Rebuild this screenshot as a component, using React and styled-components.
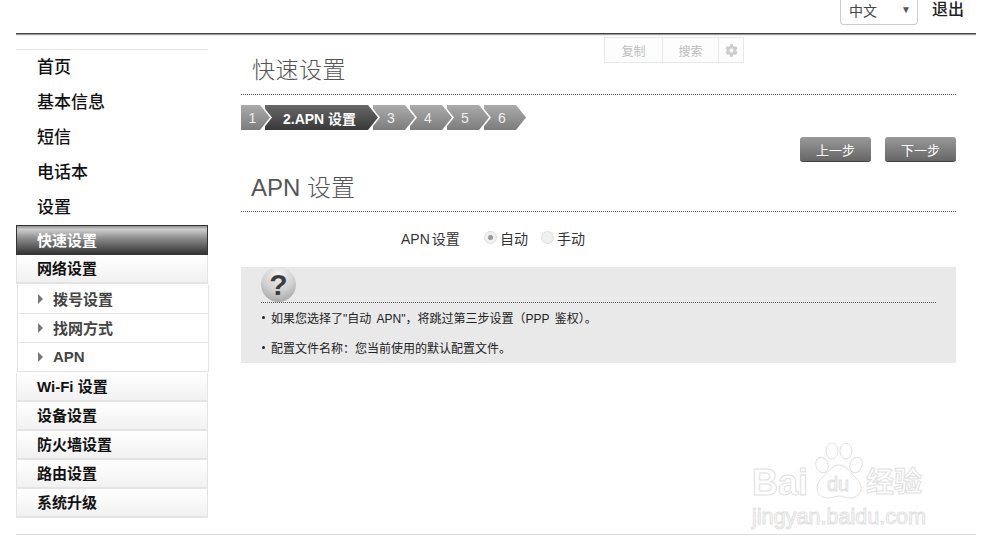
import styled, { createGlobalStyle } from "styled-components";
import { FaCog } from "react-icons/fa";

const GlobalStyle = createGlobalStyle`
  html, body {
    margin: 0;
    padding: 0;
    background: #fff;
    font-family: "Liberation Sans", "Noto Sans CJK SC", sans-serif;
    color: #333;
  }
`;

const Page = styled.div`
  position: relative;
  width: 960px;
  height: 548px;
  margin-left: 16px;
  overflow: hidden;
`;

const Header = styled.header`
  display: flex;
  justify-content: flex-end;
  align-items: flex-start;
  height: 33px;
  border-bottom: 1px solid #444;
  box-shadow: 0 1px 0 #999, 0 2px 0 #eee;
`;

const LangSelect = styled.div`
  box-sizing: border-box;
  display: flex;
  justify-content: space-between;
  align-items: center;
  width: 78px;
  height: 25px;
  padding: 0 6px 5px 8px;
  border: 1px solid #ccc;
  border-top: none;
  border-radius: 0 0 4px 4px;
  font-size: 14px;
  color: #444;
`;

const LangArrow = styled.span`
  font-size: 10px;
  color: #555;
`;

const Logout = styled.a`
  margin: 0 12px 0 14px;
  font-size: 16px;
  line-height: 19px;
  font-weight: 500;
  color: #222;
`;

const Body = styled.div`
  display: flex;
  gap: 33px;
  height: 500px;
  border-bottom: 1px solid #ddd;
`;

const Sidebar = styled.nav`
  width: 192px;
  flex: none;
  padding-top: 15px;
`;

const TopList = styled.div`
  border-top: 1px solid #e8e8e8;
`;

const TopItem = styled.div`
  box-sizing: border-box;
  display: flex;
  align-items: center;
  height: 35px;
  padding: 0 0 5px 21px;
  font-size: 17px;
  font-weight: 500;
  color: #111;
`;

const ActiveItem = styled.div`
  box-sizing: border-box;
  display: flex;
  align-items: center;
  height: 30px;
  padding: 0 0 2px 20px;
  border: 1px solid #333;
  background: linear-gradient(#8f8f8f, #cfcfcf 12%, #8a8a8a 45%, #333);
  font-size: 15px;
  font-weight: 700;
  color: #fff;
`;

const GroupItem = styled.div`
  box-sizing: border-box;
  display: flex;
  align-items: center;
  height: 29px;
  padding: 0 0 2px 20px;
  border: solid #e4e4e4;
  border-width: 0 1px 2px 1px;
  background: linear-gradient(#fff, #f1f1f1);
  font-size: 15px;
  font-weight: 700;
  color: #111;
`;

const SubItem = styled.div`
  box-sizing: border-box;
  display: flex;
  align-items: center;
  gap: 10px;
  width: 192px;
  height: 29px;
  margin-left: 1px;
  padding: 0 0 1px 20px;
  border: solid #e4e4e4;
  border-width: 0 1px 1px 1px;
  background: #fff;
  font-size: 15px;
  font-weight: 700;
  color: #444;
`;

const SubList = styled.div`
  padding: 1px 0;
`;

const SubArrow = styled.span`
  width: 0;
  height: 0;
  border-left: 5px solid #777;
  border-top: 5px solid transparent;
  border-bottom: 5px solid transparent;
`;

const Main = styled.main`
  position: relative;
  width: 715px;
  flex: none;
`;

const Toolbar = styled.div`
  position: absolute;
  top: 3px;
  left: 363px;
  display: flex;
  height: 26px;
  box-sizing: border-box;
  border: 1px solid #e8e8e8;
  background: #fdfdfd;
  font-size: 12px;
  color: #bbb;
`;

const ToolButton = styled.div`
  display: flex;
  align-items: center;
  justify-content: center;
  width: ${(p) => p.$w}px;
  border-left: ${(p) => (p.$first ? "none" : "1px solid #e8e8e8")};
`;

const PageTitle = styled.h1`
  box-sizing: border-box;
  display: flex;
  align-items: flex-end;
  height: 61px;
  margin: 0;
  padding: 0 0 9px 11px;
  border-bottom: 1px dotted #555;
  font-size: 23px;
  line-height: 30px;
  letter-spacing: 0.5px;
  font-weight: 300;
  color: #555;
`;

const Steps = styled.div`
  display: flex;
  margin-top: 10px;
  height: 25px;
`;

const Step = styled.div`
  position: relative;
  z-index: ${(p) => p.$z};
  box-sizing: border-box;
  display: flex;
  align-items: center;
  justify-content: ${(p) => (p.$active ? "flex-start" : "center")};
  width: ${(p) => p.$w}px;
  height: 25px;
  margin-right: -7px;
  padding: ${(p) => (p.$active ? "0 0 0 18px" : "0 8px 0 0")};
  font-size: 14px;
  font-weight: ${(p) => (p.$active ? 700 : 400)};
  color: ${(p) => (p.$active ? "#fff" : "#eee")};
  background: #fff;
  clip-path: polygon(0 0, calc(100% - 10px) 0, 100% 50%, calc(100% - 10px) 100%, 0 100%);

  &::before {
    content: "";
    position: absolute;
    inset: 0 2px 0 0;
    z-index: -1;
    background: ${(p) =>
      p.$active
        ? "linear-gradient(#686868, #383838)"
        : "linear-gradient(#ababab, #7c7c7c)"};
    clip-path: polygon(0 0, calc(100% - 10px) 0, 100% 50%, calc(100% - 10px) 100%, 0 100%);
  }
`;

const Actions = styled.div`
  display: flex;
  justify-content: flex-end;
  gap: 14px;
  margin-top: 7px;
`;

const NavButton = styled.button`
  width: 71px;
  height: 25px;
  padding: 0;
  border: none;
  border-bottom: 1px solid #444;
  border-radius: 3px;
  background: linear-gradient(#999, #666);
  font-family: inherit;
  font-size: 13px;
  color: #fff;
`;

const SectionTitle = styled.h2`
  box-sizing: border-box;
  height: 50px;
  margin: 0;
  padding: 10px 0 0 10px;
  border-bottom: 1px dotted #555;
  font-size: 24px;
  line-height: 32px;
  font-weight: 300;
  color: #555;
`;

const FormRow = styled.div`
  box-sizing: border-box;
  display: flex;
  align-items: center;
  height: 55px;
  padding: 0 0 4px 160px;
  font-size: 14px;
  color: #333;
`;

const FormLabel = styled.span`
  width: 83px;
  word-spacing: -2px;
`;

const RadioOption = styled.label`
  display: flex;
  align-items: center;
  gap: 3px;
  margin-right: 13px;
`;

const RadioDot = styled.span`
  box-sizing: border-box;
  display: flex;
  align-items: center;
  justify-content: center;
  width: 13px;
  height: 13px;
  border: 1px solid #ddd;
  border-radius: 50%;
  background: #f0f0f0;

  &::after {
    content: "";
    width: 5px;
    height: 5px;
    border-radius: 50%;
    background: ${(p) => (p.$on ? "#999" : "transparent")};
  }
`;

const HelpBox = styled.section`
  box-sizing: border-box;
  height: 96px;
  padding: 0 20px;
  background: #e9e9e9;
`;

const HelpHead = styled.div`
  height: 35px;
  border-bottom: 1px dotted #555;
`;

const HelpIcon = styled.div`
  display: flex;
  align-items: center;
  justify-content: center;
  width: 35px;
  height: 35px;
  border-radius: 50%;
  background: radial-gradient(circle at 50% 20%, #f4f4f4, #d0d0d0 50%, #989898);
  font-size: 30px;
  font-weight: 700;
  color: #3c3c3c;
`;

const HelpLine = styled.p`
  box-sizing: border-box;
  display: flex;
  align-items: center;
  gap: 6px;
  height: 30px;
  margin: 0;
  padding-bottom: 2px;
  font-size: 12px;
  word-spacing: 2px;
  color: #222;

  &::before {
    content: "";
    width: 3px;
    height: 3px;
    margin-left: 1px;
    border-radius: 50%;
    background: #222;
  }
`;

const Watermark = styled.div`
  position: absolute;
  left: 736px;
  top: 443px;
  width: 180px;
  height: 90px;
  color: transparent;
  -webkit-text-stroke: 1px #e0e0e0;
`;

const MarkBai = styled.span`
  position: absolute;
  left: 0;
  top: 20px;
  font-size: 36px;
  line-height: 40px;
  font-weight: 700;
`;

const MarkDu = styled.span`
  position: absolute;
  left: 75px;
  top: 29px;
  font-size: 20px;
  line-height: 24px;
`;

const MarkCn = styled.span`
  position: absolute;
  left: 114px;
  top: 22px;
  font-size: 28px;
  line-height: 36px;
  font-weight: 700;
`;

const MarkUrl = styled.span`
  position: absolute;
  left: 0;
  top: 60px;
  font-size: 21.6px;
  line-height: 28px;
  white-space: nowrap;
`;

const PawSvg = styled.svg`
  position: absolute;
  left: 62px;
  top: 0;
`;

function Paw() {
  return (
    <PawSvg width="50" height="56" viewBox="0 0 50 56" fill="none" stroke="#e0e0e0" strokeWidth="1">
      <ellipse cx="8" cy="22" rx="6" ry="8" transform="rotate(-20 8 22)" />
      <ellipse cx="18" cy="8" rx="6" ry="8" />
      <ellipse cx="32" cy="8" rx="6" ry="8" />
      <ellipse cx="42" cy="22" rx="6" ry="8" transform="rotate(20 42 22)" />
      <path d="M25 22c-6 0-9 5-13 9-4 4-9 8-9 14 0 6 5 10 11 10 4 0 7-2 11-2s7 2 11 2c6 0 11-4 11-10 0-6-5-10-9-14-4-4-7-9-13-9z" />
    </PawSvg>
  );
}

const topItems = ["首页", "基本信息", "短信", "电话本", "设置"];
const subItems = ["拨号设置", "找网方式", "APN"];
const groupItems = ["Wi-Fi 设置", "设备设置", "防火墙设置", "路由设置", "系统升级"];
const steps = [
  { label: "1", w: 31 },
  { label: "2.APN 设置", w: 115, active: true },
  { label: "3", w: 44 },
  { label: "4", w: 44 },
  { label: "5", w: 44 },
  { label: "6", w: 44 },
];

export default function App() {
  return (
    <>
      <GlobalStyle />
      <Page>
        <Header>
          <LangSelect>
            中文
            <LangArrow>▼</LangArrow>
          </LangSelect>
          <Logout>退出</Logout>
        </Header>
        <Body>
          <Sidebar>
            <TopList>
              {topItems.map((t) => (
                <TopItem key={t}>{t}</TopItem>
              ))}
            </TopList>
            <ActiveItem>快速设置</ActiveItem>
            <GroupItem>网络设置</GroupItem>
            <SubList>
              {subItems.map((t) => (
                <SubItem key={t}>
                  <SubArrow />
                  {t}
                </SubItem>
              ))}
            </SubList>
            {groupItems.map((t) => (
              <GroupItem key={t}>{t}</GroupItem>
            ))}
          </Sidebar>
          <Main>
            <Toolbar>
              <ToolButton $first $w={57}>复制</ToolButton>
              <ToolButton $w={55}>搜索</ToolButton>
              <ToolButton $w={24}>
                <FaCog size={13} color="#ccc" />
              </ToolButton>
            </Toolbar>
            <PageTitle>快速设置</PageTitle>
            <Steps>
              {steps.map((s, i) => (
                <Step key={s.label} $w={s.w} $active={s.active} $z={10 - i}>
                  {s.label}
                </Step>
              ))}
            </Steps>
            <Actions>
              <NavButton>上一步</NavButton>
              <NavButton>下一步</NavButton>
            </Actions>
            <SectionTitle>APN 设置</SectionTitle>
            <FormRow>
              <FormLabel>APN 设置</FormLabel>
              <RadioOption>
                <RadioDot $on />
                自动
              </RadioOption>
              <RadioOption>
                <RadioDot />
                手动
              </RadioOption>
            </FormRow>
            <HelpBox>
              <HelpHead>
                <HelpIcon>?</HelpIcon>
              </HelpHead>
              <HelpLine>如果您选择了"自动 APN"，将跳过第三步设置（PPP 鉴权）。</HelpLine>
              <HelpLine>配置文件名称：您当前使用的默认配置文件。</HelpLine>
            </HelpBox>
          </Main>
        </Body>
        <Watermark>
          <Paw />
          <MarkBai>Bai</MarkBai>
          <MarkDu>du</MarkDu>
          <MarkCn>经验</MarkCn>
          <MarkUrl>jingyan.baidu.com</MarkUrl>
        </Watermark>
      </Page>
    </>
  );
}
